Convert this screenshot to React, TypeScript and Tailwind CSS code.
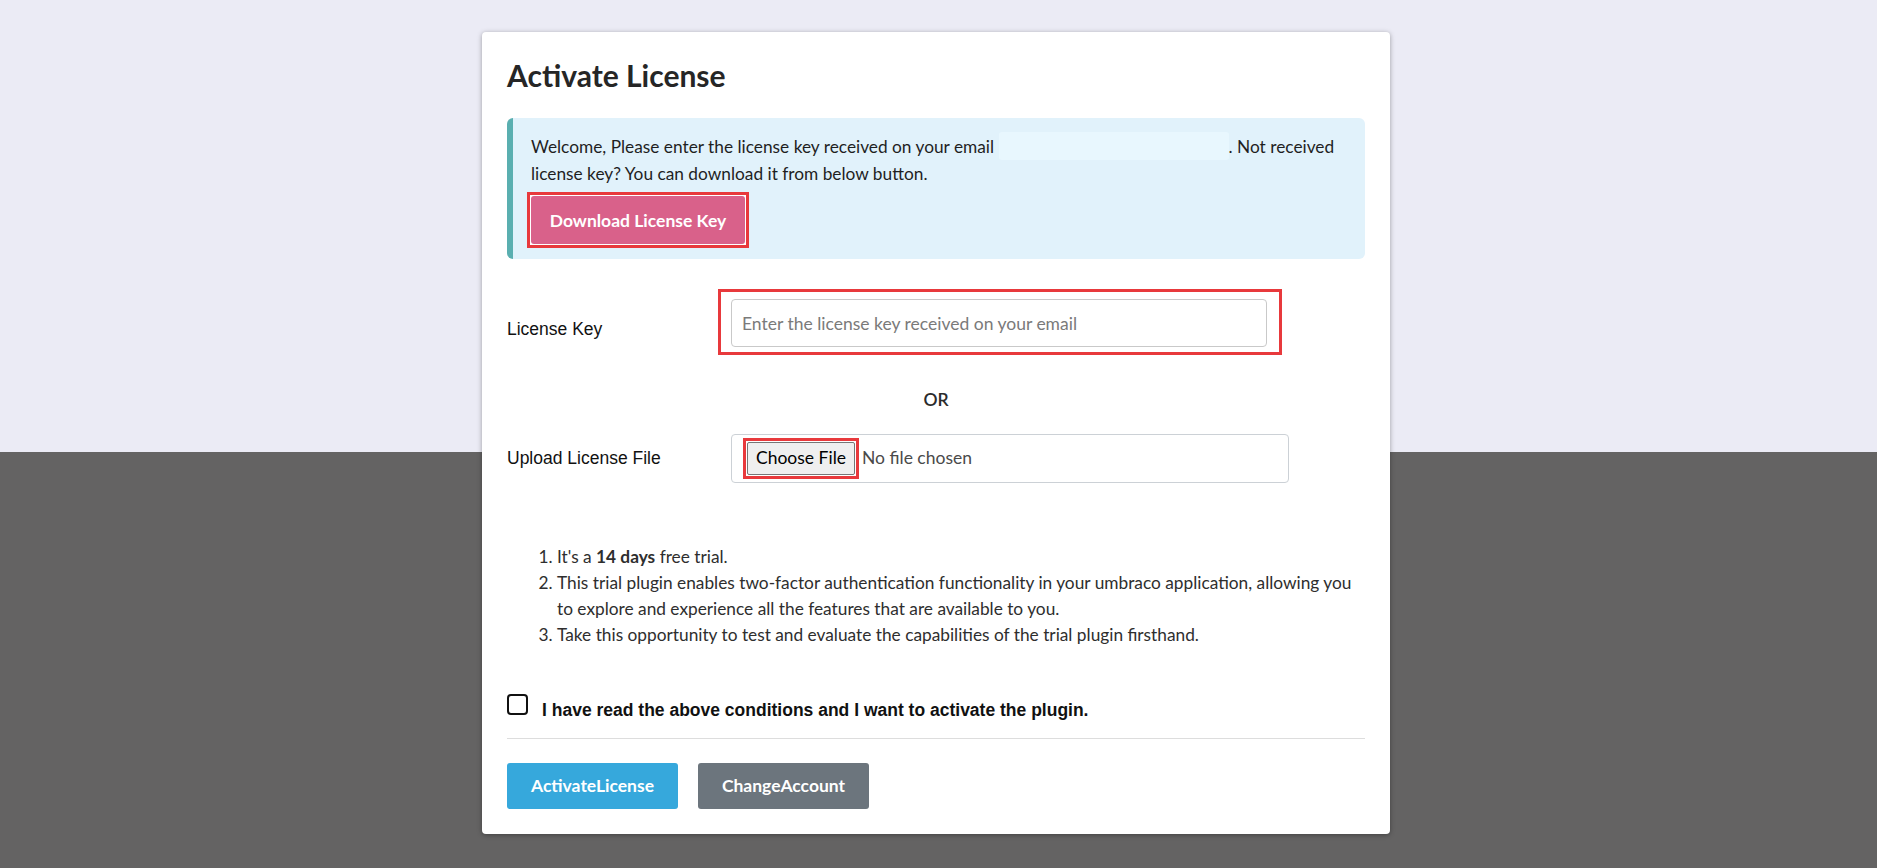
const RedMark = ({ className, children }: { className?: string; children: React.ReactNode }) => (
    <div className={"border-[3px] border-[#e8393c] bg-white " + (className ?? "")}>{children}</div>
)

const App = () => {
    return (
        <div className="min-h-[868px] w-full pr-[5px] pt-[32px] pb-[35px] bg-[linear-gradient(to_bottom,#ebebf5_452px,#646363_452px)] font-['Lato',sans-serif] text-[17.3px]">
            <div className="mx-auto w-[908px] bg-white rounded-[4px] shadow-[0_1px_5px_rgba(0,0,0,0.35)] p-[25px]">
                <h1 className="text-[30px] leading-[36px] font-bold text-[#262626]">Activate License</h1>

                <div className="mt-[25px] rounded-[6px] border-l-[6px] border-[#5aafb0] bg-[#e1f2fb] pl-[18px] pr-[20px] pt-[15px] pb-[11px] text-[#1f1f1f] leading-[27px]">
                    <p>
                        Welcome, Please enter the license key received on your email{" "}
                        <span className="inline-block w-[230px] h-[28px] align-middle -mt-[6px] rounded-[3px] bg-[#e8f7fe]"></span>. Not received license key? You can download it from below button.
                    </p>
                    <RedMark className="mt-[5px] -ml-[4px] inline-block p-px">
                        <button className="block w-[214px] h-[48px] rounded-[3px] bg-[#d9618a] text-white font-bold text-[17.5px]">
                            Download License Key
                        </button>
                    </RedMark>
                </div>

                <div className="mt-[30px] flex items-start">
                    <label className="w-[211px] pt-[27px] font-['Liberation_Sans',Arial,sans-serif] text-[17.5px] leading-[27px] text-[#111]">License Key</label>
                    <RedMark className="pl-[10px] pr-[12px] pt-[7px] pb-[5px]">
                        <input
                            type="text"
                            placeholder="Enter the license key received on your email"
                            className="block w-[536px] h-[48px] rounded-[4px] border border-[#c9c9c9] px-[10px] text-[17.5px] text-[#333] placeholder:text-[#7a7a7a] outline-none"
                        />
                    </RedMark>
                </div>

                <p className="mt-[31px] text-center leading-[27px] font-semibold text-[17.5px] text-[#2b2b2b]">OR</p>

                <div className="mt-[21px] flex items-start">
                    <label className="w-[224px] pt-[11px] font-['Liberation_Sans',Arial,sans-serif] text-[17.5px] leading-[27px] text-[#111]">Upload License File</label>
                    <div className="w-[558px] h-[49px] flex items-center rounded-[4px] border border-[#ccd1d6] pl-[11px]">
                        <RedMark className="p-px">
                            <button className="block w-[108px] h-[33px] rounded-[2px] border border-[#767676] bg-[#efefef] text-[17.5px] text-black">
                                Choose File
                            </button>
                        </RedMark>
                        <span className="ml-[3px] text-[17.5px] text-[#4a4a4a]">No file chosen</span>
                    </div>
                </div>

                <ol className="mt-[61px] list-decimal pl-[50px] pr-[6px] leading-[26px] text-[#2e2e2e]">
                    <li>It's a <b className="font-bold">14 days</b> free trial.</li>
                    <li>This trial plugin enables two-factor authentication functionality in your umbraco application, allowing you to explore and experience all the features that are available to you.</li>
                    <li>Take this opportunity to test and evaluate the capabilities of the trial plugin firsthand.</li>
                </ol>

                <div className="mt-[46px] flex items-start">
                    <span className="w-[21px] h-[21px] shrink-0 rounded-[4px] border-2 border-[#111] bg-white"></span>
                    <span className="ml-[14px] mt-[3px] font-['Liberation_Sans',Arial,sans-serif] font-bold text-[17.5px] leading-[27px] text-[#111]">
                        I have read the above conditions and I want to activate the plugin.
                    </span>
                </div>

                <div className="mt-[14px] h-px bg-[#dddddd]"></div>

                <div className="mt-[24px] flex gap-[20px]">
                    <button className="w-[171px] h-[46px] rounded-[3px] bg-[#36a8dc] text-white font-bold text-[17.5px]">ActivateLicense</button>
                    <button className="w-[171px] h-[46px] rounded-[3px] bg-[#6c757d] text-white font-bold text-[17.5px]">ChangeAccount</button>
                </div>
            </div>
        </div>
    )
}

export default App
